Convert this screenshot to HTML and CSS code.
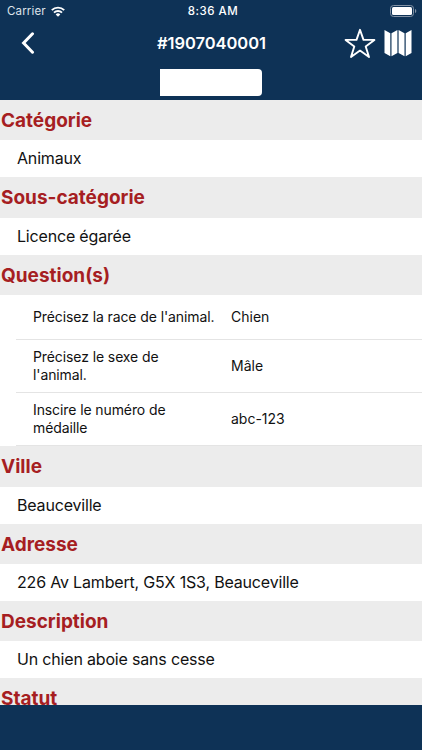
FILE: index.html
```html
<!DOCTYPE html>
<html lang="fr">
<head>
    <meta charset="UTF-8">
    <meta name="viewport" content="width=device-width, initial-scale=1.0">
    <title>#1907040001</title>
    <link rel="stylesheet" href="styles.css">
</head>
<body>
    <header class="header">
        <div class="status-bar">
            <div class="carrier">
                <span>Carrier</span>
                <svg class="wifi" viewBox="0 0 14 11" width="14" height="11">
                    <path d="M.8 4.1a8.9 8.9 0 0 1 12.4 0M3 6.6a5.7 5.7 0 0 1 8 0" fill="none" stroke="#fff" stroke-width="1.9"/>
                    <path d="M7 10.8L4.7 8.4a3.3 3.3 0 0 1 4.6 0z" fill="#fff"/>
                </svg>
            </div>
            <span class="time">8:36 AM</span>
            <svg class="battery" viewBox="0 0 27 12" width="27" height="12">
                <rect x=".5" y=".5" width="23" height="11" rx="3" fill="none" stroke="#8292a5"/>
                <rect x="2" y="2" width="20" height="8" rx="1.5" fill="#fff"/>
                <path d="M25 4c1.7.5 1.7 3.5 0 4z" fill="#8292a5"/>
            </svg>
        </div>
        <div class="nav-bar">
            <svg class="back" viewBox="0 0 14 22" width="14" height="22">
                <path d="M11.5 1.8L2.6 11l8.9 9.2" fill="none" stroke="#fff" stroke-width="3" stroke-linecap="round"/>
            </svg>
            <h1 class="title">#1907040001</h1>
            <div class="actions">
                <svg viewBox="0 0 32 31" width="32" height="31">
                    <path d="M16 1.8l3.5 10.1h10.9l-8.7 6.6 3.3 10.5-9-6.4-9 6.4 3.3-10.5-8.7-6.6h10.9z" fill="none" stroke="#fff" stroke-width="1.9" stroke-linejoin="round"/>
                </svg>
                <svg viewBox="0 0 28 28" width="28" height="28">
                    <path d="M.5 1l5.8 3.3v23L.5 24zM7.5 4.3L13.4 1v23l-5.9 3.3zM14.6 1l5.9 3.3v23L14.6 24zM21.7 4.3L27.5 1v23l-5.8 3.3z" fill="#fff"/>
                </svg>
            </div>
        </div>
        <div class="segment"></div>
    </header>

    <main class="content">
        <h2>Catégorie</h2>
        <p class="value">Animaux</p>
        <h2>Sous-catégorie</h2>
        <p class="value">Licence égarée</p>
        <h2>Question(s)</h2>
        <div class="questions">
            <div class="question">
                <span class="label">Précisez la race de l'animal.</span>
                <span class="answer">Chien</span>
            </div>
            <div class="question">
                <span class="label">Précisez le sexe de<br>l'animal.</span>
                <span class="answer">Mâle</span>
            </div>
            <div class="question">
                <span class="label">Inscire le numéro de<br>médaille</span>
                <span class="answer">abc-123</span>
            </div>
        </div>
        <h2>Ville</h2>
        <p class="value">Beauceville</p>
        <h2>Adresse</h2>
        <p class="value">226 Av Lambert, G5X 1S3, Beauceville</p>
        <h2>Description</h2>
        <p class="value">Un chien aboie sans cesse</p>
        <h2>Statut</h2>
    </main>

    <footer class="footer"></footer>
</body>
</html>
```
FILE: styles.css
```css
* {
    box-sizing: border-box;
}
body {
    margin: 0;
    height: 750px;
    display: flex;
    flex-direction: column;
    overflow: hidden;
    font-family: Inter, "Liberation Sans", sans-serif;
    color: #111;
    background-color: #fff;
}
svg {
    display: block;
}
.header {
    flex: none;
    height: 100px;
    background-color: #0e3256;
    color: #fff;
}
.status-bar {
    display: grid;
    grid-template-columns: 1fr auto 1fr;
    align-items: center;
    height: 22px;
    padding: 0 5px 0 7px;
    font-size: 11.5px;
}
.carrier {
    display: flex;
    align-items: center;
    gap: 5px;
    color: #dde3ea;
    letter-spacing: 0.15px;
}
.time {
    margin-left: 2px;
    font-weight: 500;
    font-size: 11.5px;
    letter-spacing: 0.5px;
}
.battery {
    justify-self: end;
}
.nav-bar {
    display: grid;
    grid-template-columns: 1fr auto 1fr;
    align-items: center;
    height: 42px;
    padding: 0 10px 0 21px;
}
.title {
    margin: 0 0 0 -10px;
    font-size: 16.5px;
    font-weight: 600;
    letter-spacing: -0.05px;
}
.actions {
    display: flex;
    justify-content: flex-end;
    align-items: center;
    gap: 8px;
}
.segment {
    width: 102px;
    height: 27px;
    margin: 5px auto 0 160px;
    border-radius: 0 4px 4px 0;
    background-color: #fff;
}
.content {
    flex: 1;
    min-height: 0;
    overflow: hidden;
}
h2 {
    height: 40.4px;
    margin: 0;
    padding-left: 1px;
    background-color: #ececec;
    color: #a61e22;
    font-size: 19px;
    font-weight: 700;
    line-height: 41px;
}
.value {
    height: 37px;
    margin: 0;
    padding-left: 17px;
    font-size: 16px;
    letter-spacing: -0.18px;
    line-height: 37px;
}
.questions {
    padding-left: 16px;
}
.question {
    display: flex;
    align-items: center;
    height: 53px;
    padding-left: 17px;
    border-bottom: 1px solid #e4e4e4;
    font-size: 14px;
    line-height: 18.5px;
}
.question:first-child {
    height: 45px;
}
.label {
    width: 198px;
    letter-spacing: -0.1px;
}
.footer {
    flex: none;
    height: 45px;
    background-color: #0e3256;
}
```
